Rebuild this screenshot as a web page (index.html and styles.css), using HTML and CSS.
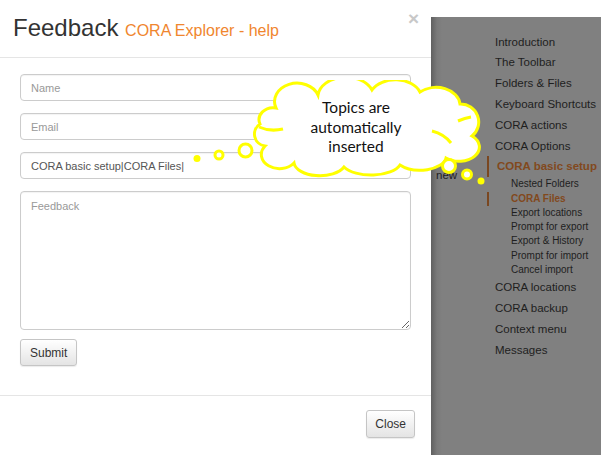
FILE: index.html
```html
<!DOCTYPE html>
<html>
<head>
  <title>Feedback - CORA Explorer help</title>
  <link rel="stylesheet" href="styles.css">
</head>
<body>
  <div class="screen">
    <div class="modal">
      <div class="modal-header">
        <span class="close">&times;</span>
        <h4>Feedback <span class="sub-title">CORA Explorer - help</span></h4>
      </div>
      <div class="modal-body">
        <input type="text" class="field" placeholder="Name">
        <input type="text" class="field" placeholder="Email">
        <input type="text" class="field" value="CORA basic setup|CORA Files|">
        <textarea class="field area" placeholder="Feedback"></textarea>
        <button class="btn">Submit</button>
      </div>
      <div class="modal-footer">
        <button class="btn">Close</button>
      </div>
    </div>

    <div class="side">
      <div class="backdrop">
        <span class="behind">new</span>
        <ul class="toc">
          <li><a>Introduction</a></li>
          <li><a>The Toolbar</a></li>
          <li><a>Folders &amp; Files</a></li>
          <li><a>Keyboard Shortcuts</a></li>
          <li><a>CORA actions</a></li>
          <li><a>CORA Options</a></li>
          <li><a class="active">CORA basic setup</a>
            <ul class="sub">
              <li><a>Nested Folders</a></li>
              <li><a class="active">CORA Files</a></li>
              <li><a>Export locations</a></li>
              <li><a>Prompt for export</a></li>
              <li><a>Export &amp; History</a></li>
              <li><a>Prompt for import</a></li>
              <li><a>Cancel import</a></li>
            </ul>
          </li>
          <li><a>CORA locations</a></li>
          <li><a>CORA backup</a></li>
          <li><a>Context menu</a></li>
          <li><a>Messages</a></li>
        </ul>
      </div>
    </div>
  </div>

  <!-- callout drawn over the dialog and the backdrop -->
  <div class="callout">
    <svg width="300" height="110" viewBox="190 80 300 110">
      <g fill="#fff" stroke="#ffff00" stroke-width="3">
        <path d="M 276,108 A 22,18 0 0 1 318,95 A 28,20 0 0 1 372,90 A 26,18 0 0 1 420,92 A 24,18 0 0 1 460,104 A 18,18 0 0 1 472,136 A 20,14 0 0 1 446,158 A 26,14 0 0 1 400,165 A 30,14 0 0 1 344,167 A 26,14 0 0 1 294,163 A 18,14 0 0 1 265,146 A 12,12 0 0 1 260,124 A 14,12 0 0 1 276,108 Z"/>
        <path fill="none" d="M 259,127 Q 270,132 283,129"/>
        <path fill="none" d="M 432,131 Q 444,134 451,143"/>
        <path fill="none" d="M 458,121 Q 465,118 471,117"/>
        <circle cx="245.5" cy="150.5" r="6.5"/>
        <circle cx="219" cy="155" r="4"/>
        <circle cx="449" cy="166" r="6.5"/>
        <circle cx="467" cy="174.5" r="4.5"/>
      </g>
      <g fill="#ffff00">
        <circle cx="197" cy="158.5" r="3.5"/>
        <circle cx="481" cy="181" r="3.5"/>
      </g>
    </svg>
    <div class="callout-text">Topics are<br>automatically<br>inserted</div>
  </div>
</body>
</html>
```

FILE: styles.css
```css
/* General styles */
* {
  box-sizing: border-box;
}

body {
  margin: 0;
  font-family: "Liberation Sans", Arial, sans-serif;
  background-color: #fff;
  color: #333;
}

.screen {
  display: flex;
  width: 601px;
  height: 455px;
  overflow: hidden;
}

/* Dialog */
.modal {
  width: 431px;
  height: 455px;
  background-color: #fff;
  display: flex;
  flex-direction: column;
}

.modal-header {
  position: relative;
  padding: 14px 15px 15px 13px;
  border-bottom: 1px solid #e5e5e5;
}

.modal-header h4 {
  margin: 0;
  height: 28px;
  font-size: 24px;
  font-weight: normal;
  line-height: 28px;
  color: #333;
}

.sub-title {
  font-size: 16px;
  color: #f0862e;
}

.close {
  position: absolute;
  top: 9px;
  right: 12px;
  font-size: 19px;
  font-weight: bold;
  color: #c8c8c8;
  line-height: 20px;
}

.modal-body {
  padding: 16px 20px 29px;
  display: flex;
  flex-direction: column;
  align-items: flex-start;
}

.field {
  width: 391px;
  height: 27px;
  margin: 0 0 12px;
  padding: 4px 10px;
  border: 1px solid #ccc;
  border-radius: 4px;
  box-shadow: inset 0 1px 1px rgba(0, 0, 0, 0.05);
  font-family: "Liberation Sans", Arial, sans-serif;
  font-size: 11px;
  color: #555;
}

.field::placeholder {
  color: #999;
}

.area {
  height: 139px;
  margin-bottom: 9px;
  padding: 8px 10px;
  resize: vertical;
}

.btn {
  height: 27px;
  padding: 0 9px;
  border: 1px solid #c5c5c5;
  border-radius: 3px;
  background: linear-gradient(#fff, #e4e4e4);
  box-shadow: 0 1px 1px rgba(0, 0, 0, 0.08);
  font-family: "Liberation Sans", Arial, sans-serif;
  font-size: 12px;
  color: #333;
}

.modal-footer {
  border-top: 1px solid #e5e5e5;
  padding: 14px 16px;
  display: flex;
  justify-content: flex-end;
}

.modal-footer .btn {
  height: 28px;
  padding: 0 8px;
}

/* Help page behind the backdrop */
.side {
  flex: 1;
  padding-top: 17px;
}

.backdrop {
  position: relative;
  height: 438px;
  background: linear-gradient(to right, #606060, #7a7a7a 6px, #808080 11px);
  padding: 14.6px 0 0 56px;
}

.behind {
  position: absolute;
  left: 5px;
  top: 152px;
  font-size: 11.5px;
  color: #1e1e1e;
}

.toc,
.toc ul {
  list-style: none;
  margin: 0;
  padding: 0;
}

.toc a {
  display: block;
  padding-left: 8px;
  font-size: 11.5px;
  line-height: 20.8px;
  color: #1e1e1e;
}

.toc a.active {
  border-left: 2px solid #7a4720;
  font-weight: bold;
  color: #82491d;
}

.toc .sub a {
  padding-left: 24px;
  font-size: 10px;
  line-height: 14.33px;
}

.toc .sub a.active {
  padding-left: 22px;
}

/* Thought bubble */
.callout {
  position: absolute;
  left: 190px;
  top: 80px;
  width: 300px;
  height: 110px;
}

.callout svg {
  display: block;
}

.callout-text {
  position: absolute;
  left: 106px;
  top: 18px;
  width: 120px;
  text-align: center;
  font-family: Lato, "Open Sans", sans-serif;
  font-size: 15.5px;
  line-height: 19.5px;
  color: #111;
}
```
